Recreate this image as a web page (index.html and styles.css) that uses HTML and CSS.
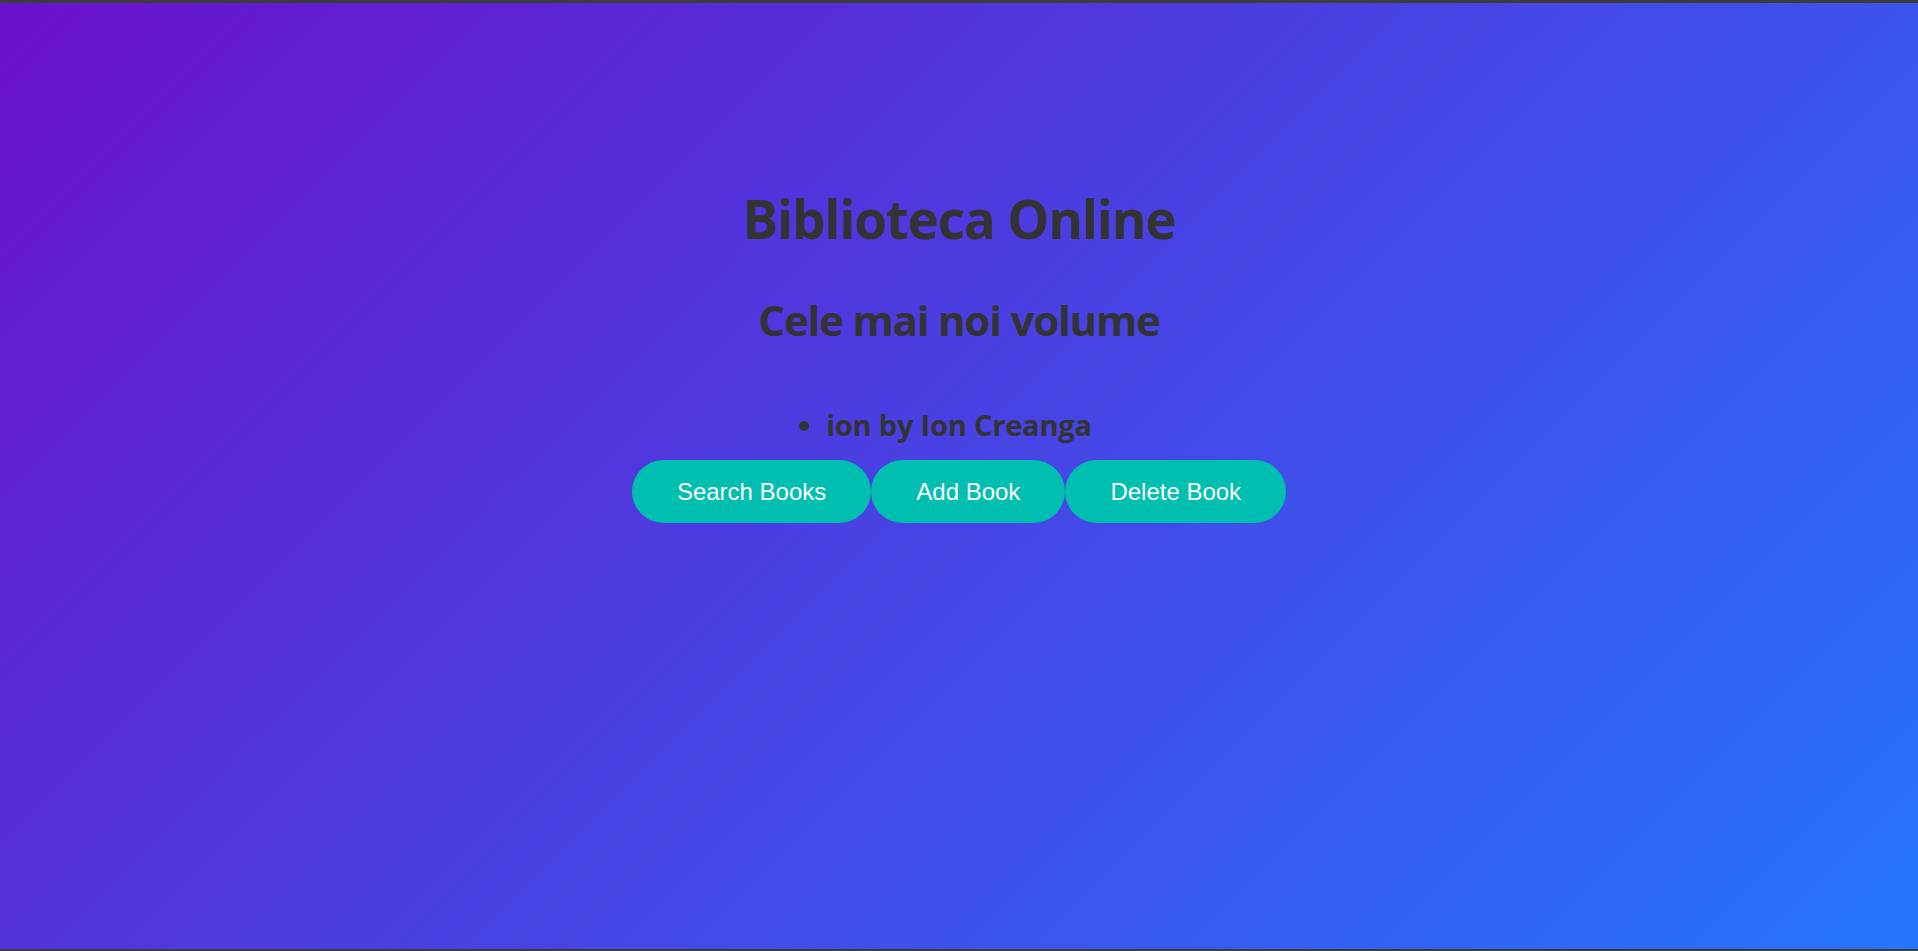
FILE: index.html
```html
<!DOCTYPE html>
<html lang="ro">
<head>
<meta charset="utf-8">
<title>Biblioteca Online</title>
<link rel="stylesheet" href="styles.css">
</head>
<body>
  <main class="page">
    <h1 class="title">Biblioteca Online</h1>
    <h2 class="subtitle">Cele mai noi volume</h2>
    <ul class="book-list">
      <li class="book-item">ion by Ion Creanga</li>
    </ul>
    <div class="actions">
      <button class="btn">Search Books</button>
      <button class="btn">Add Book</button>
      <button class="btn">Delete Book</button>
    </div>
  </main>
</body>
</html>
```

FILE: styles.css
```css
html, body {
  margin: 0;
  padding: 0;
  height: 100%;
}

body {
  box-sizing: border-box;
  min-height: 100vh;
  border-top: 3px solid #3c3c3c;
  border-bottom: 2px solid #3c3c3c;
  background: linear-gradient(135deg, #6a11cb, #2575fc);
  font-family: "Open Sans", "Noto Sans", sans-serif;
  color: #333;
}

.page {
  display: flex;
  flex-direction: column;
  align-items: center;
  padding-top: 184px;
  text-align: center;
}

.title {
  margin: 0;
  font-size: 53px;
  line-height: 64px;
  font-weight: 700;
  letter-spacing: -1.2px;
}

.subtitle {
  margin: 43px 0 0;
  font-size: 42px;
  line-height: 52px;
  font-weight: 700;
  letter-spacing: -1.2px;
}

.book-list {
  margin: 62px 0 0;
  padding: 0;
  list-style: disc;
}

.book-item {
  font-size: 29px;
  line-height: 34px;
  font-weight: 700;
  letter-spacing: -0.2px;
}

.actions {
  display: flex;
  margin-top: 18px;
}

.btn {
  font-family: "Liberation Sans", Arial, sans-serif;
  font-size: 24px;
  line-height: 27px;
  padding: 18px 45px;
  border: none;
  border-radius: 32px;
  background: #00bfb0;
  color: #fff;
  cursor: pointer;
}
```
